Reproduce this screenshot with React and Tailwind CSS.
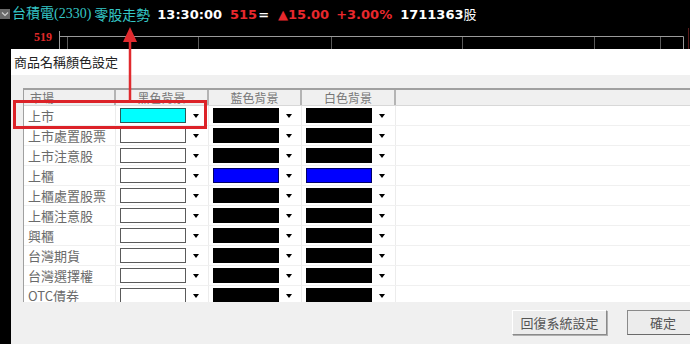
import React from 'react';

const cjk = "font-['Noto_Sans_CJK_TC','Noto_Sans_CJK_SC',sans-serif]";

const rows = [
  { name: '上市', c: ['cyan', 'black', 'black'] },
  { name: '上市處置股票', c: ['white', 'black', 'black'] },
  { name: '上市注意股', c: ['white', 'black', 'black'] },
  { name: '上櫃', c: ['white', 'blue', 'blue'] },
  { name: '上櫃處置股票', c: ['white', 'black', 'black'] },
  { name: '上櫃注意股', c: ['white', 'black', 'black'] },
  { name: '興櫃', c: ['white', 'black', 'black'] },
  { name: '台灣期貨', c: ['white', 'black', 'black'] },
  { name: '台灣選擇權', c: ['white', 'black', 'black'] },
  { name: 'OTC債券', c: ['white', 'black', 'black'] },
];

const boxClass = {
  cyan: 'bg-[#00ffff] border-[#2a5a5a]',
  white: 'bg-white border-[#5a5a5a]',
  black: 'bg-black border-black',
  blue: 'bg-[#0000ff] border-[#00006a]',
};

const ColorCell = ({ color }) => (
  <div className="flex items-center pl-[4px] border-r border-[#ececec]">
    <div className={`w-[66px] h-[15px] border ${boxClass[color]}`} />
    <div className="w-[19px] h-[15px] flex items-center justify-center">
      <div className="w-0 h-0 border-l-[3px] border-r-[3px] border-t-[4px] border-l-transparent border-r-transparent border-t-black" />
    </div>
  </div>
);

const TopBar = () => (
  <div className="h-[28px] flex items-center whitespace-nowrap">
    <div className="w-[10px] h-[10px] bg-[#6a6a6a] flex items-center justify-center shrink-0">
      <svg width="8" height="6" viewBox="0 0 8 6">
        <path d="M1 1.5 L4 4.5 L7 1.5" stroke="#d0d0d0" strokeWidth="1.2" fill="none" />
      </svg>
    </div>
    <span className="ml-[2px] text-[14px] leading-none text-[#35c6c6] font-['Liberation_Serif','Noto_Sans_CJK_TC',serif]">台積電(2330)</span>
    <span className={`ml-[3px] text-[14px] leading-none text-[#35c6c6] ${cjk}`}>零股走勢</span>
    <span className="ml-[7px] text-[13px] leading-none font-bold text-white font-['DejaVu_Sans',sans-serif]">13:30:00</span>
    <span className="ml-[8px] text-[13px] leading-none font-bold text-[#e8282d] font-['DejaVu_Sans',sans-serif]">515</span>
    <span className="ml-[1px] text-[13px] leading-none font-bold text-white font-['DejaVu_Sans',sans-serif]">=</span>
    <span className="ml-[9px] text-[13px] leading-none font-bold text-[#e8282d] font-['DejaVu_Sans',sans-serif]">▲15.00</span>
    <span className="ml-[7px] text-[13px] leading-none font-bold text-[#e8282d] font-['DejaVu_Sans',sans-serif]">+3.00%</span>
    <span className="ml-[8px] text-[13px] leading-none font-bold text-white font-['DejaVu_Sans',sans-serif]">
      1711363<span className={`font-normal ${cjk}`}>股</span>
    </span>
  </div>
);

const Chart = () => (
  <div className="flex h-[316px]">
    <div className="w-[59px] pt-[3px] pl-[34px] text-[12px] leading-none font-bold text-[#e02a2a] font-['Liberation_Serif',serif]">519</div>
    <svg width="631" height="316" className="block">
      <line x1="0.5" y1="8.5" x2="624.5" y2="8.5" stroke="#9a9a9a" />
      <line x1="0.5" y1="3" x2="0.5" y2="316" stroke="#9a9a9a" />
      <line x1="624.5" y1="8.5" x2="624.5" y2="316" stroke="#9a9a9a" />
      {[8, 139, 272, 403, 535, 601].map((x) => (
        <line key={x} x1={x + 0.5} y1="9" x2={x + 0.5} y2="316" stroke="#5c5c5c" />
      ))}
      <line x1="629.5" y1="0" x2="629.5" y2="316" stroke="#5a1c1c" />
    </svg>
  </div>
);

const Dialog = () => (
  <div className={`absolute left-[11px] top-[49px] right-0 bottom-0 bg-[#f0f0f0] flex flex-col ${cjk}`}>
    <div className="h-[26px] bg-white flex items-center pl-[3px] text-[13px] text-[#222]">商品名稱顏色設定</div>
    <div className="pt-[13px] pl-[12px]">
      <div className="h-[214px] overflow-hidden bg-white border-l border-[#a0a0a0]">
        <div className="grid grid-cols-[92px_93px_93px_94px_1fr] h-[18px] bg-[#f0f0f0] border-t-2 border-b border-b-[#d8d8d8] border-t-[#a0a0a0] text-[12px] leading-[15px] text-[#777]">
          <div className="pl-[6px] border-r-2 border-[#b4b4b4]">市場</div>
          <div className="text-center border-r-2 border-[#b4b4b4]">黑色背景</div>
          <div className="text-center border-r-2 border-[#b4b4b4]">藍色背景</div>
          <div className="text-center border-r-2 border-[#b4b4b4]">白色背景</div>
          <div />
        </div>
        {rows.map((r) => (
          <div key={r.name} className="grid grid-cols-[92px_93px_93px_94px_1fr] h-[20px] border-b border-[#f0f0f0]">
            <div className="pl-[4px] flex items-center text-[13px] leading-none text-[#6a6a6a] border-r border-[#ececec] whitespace-nowrap">{r.name}</div>
            {r.c.map((c, i) => (
              <ColorCell key={i} color={c} />
            ))}
            <div />
          </div>
        ))}
      </div>
    </div>
    <div className="flex gap-[20px] pl-[501px] pt-[8px]">
      <button className="shrink-0 w-[95px] h-[25px] bg-[#ececec] border border-t-white border-l-white border-r-[#8a8a8a] border-b-[#8a8a8a] shadow-[1px_1px_0_#b0b0b0] text-[13px] text-[#555]">回復系統設定</button>
      <button className="shrink-0 w-[80px] h-[25px] bg-[#ececec] border border-t-[#8a8a8a] border-l-[#8a8a8a] border-r-[#8a8a8a] border-b-[#6a6a6a] text-[13px] text-[#555] pr-[8px]">確定</button>
    </div>
  </div>
);

const Annotation = () => (
  <>
    <div className="absolute left-[13px] top-[100px] w-[194px] h-[29px] border-[3px] border-[#dc2228]" />
    <svg className="absolute left-0 top-0" width="690" height="344">
      <line x1="130" y1="40" x2="130" y2="101" stroke="#e02a2e" strokeWidth="2.5" />
      <polygon points="130,27 123,42 137,42" fill="#e02a2e" />
    </svg>
  </>
);

export default function App() {
  return (
    <div className="relative w-[690px] h-[344px] bg-black overflow-hidden">
      <TopBar />
      <Chart />
      <Dialog />
      <Annotation />
    </div>
  );
}
